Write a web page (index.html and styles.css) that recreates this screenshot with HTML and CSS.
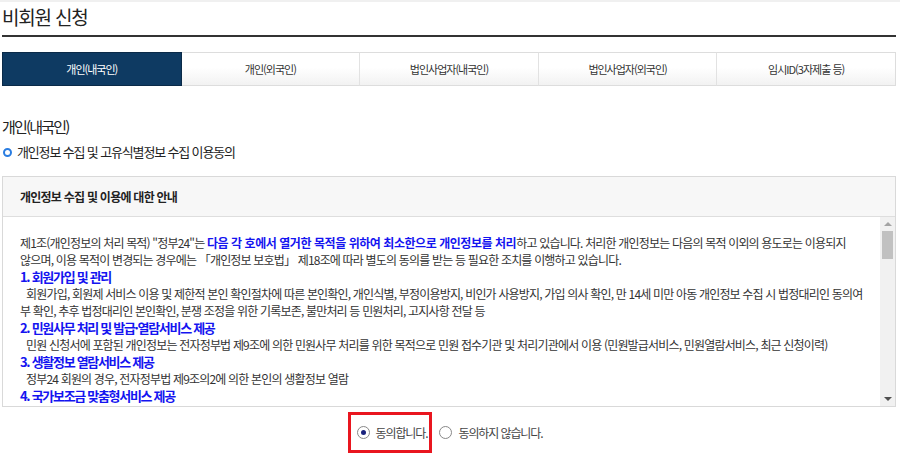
FILE: index.html
```html
<!DOCTYPE html>
<html lang="ko">
<head>
  <meta charset="UTF-8" />
  <meta name="viewport" content="width=device-width, initial-scale=1.0"/>
  <title>비회원 신청</title>
  <link rel="stylesheet" href="styles.css">
</head>
<body>
  <div class="page">
    <h1 class="page-title">비회원 신청</h1>

    <!-- 신청 유형 탭 -->
    <ul class="tabs">
      <li class="tab active">개인(내국인)</li>
      <li class="tab">개인(외국인)</li>
      <li class="tab">법인사업자(내국인)</li>
      <li class="tab">법인사업자(외국인)</li>
      <li class="tab">임시ID(3자제출 등)</li>
    </ul>

    <h2 class="section-title">개인(내국인)</h2>
    <p class="bullet-title">개인정보 수집 및 고유식별정보 수집 이용동의</p>

    <!-- 동의 안내 박스 -->
    <div class="agree-box">
      <div class="agree-head">개인정보 수집 및 이용에 대한 안내</div>
      <div class="agree-body">
        <div class="agree-text">
          <span class="line">제1조(개인정보의 처리 목적) "정부24"는 <b class="em">다음 각 호에서 열거한 목적을 위하여 최소한으로 개인정보를 처리</b>하고 있습니다. 처리한 개인정보는 다음의 목적 이외의 용도로는 이용되지</span>
          <span class="line">않으며, 이용 목적이 변경되는 경우에는 「개인정보 보호법」 제18조에 따라 별도의 동의를 받는 등 필요한 조치를 이행하고 있습니다.</span>
          <span class="line heading">1. 회원가입 및 관리</span>
          <span class="line indent">회원가입, 회원제 서비스 이용 및 제한적 본인 확인절차에 따른 본인확인, 개인식별, 부정이용방지, 비인가 사용방지, 가입 의사 확인, 만 14세 미만 아동 개인정보 수집 시 법정대리인 동의여</span>
          <span class="line">부 확인, 추후 법정대리인 본인확인, 분쟁 조정을 위한 기록보존, 불만처리 등 민원처리, 고지사항 전달 등</span>
          <span class="line heading">2. 민원사무 처리 및 발급·열람서비스 제공</span>
          <span class="line indent">민원 신청서에 포함된 개인정보는 전자정부법 제9조에 의한 민원사무 처리를 위한 목적으로 민원 접수기관 및 처리기관에서 이용 (민원발급서비스, 민원열람서비스, 최근 신청이력)</span>
          <span class="line heading">3. 생활정보 열람서비스 제공</span>
          <span class="line indent">정부24 회원의 경우, 전자정부법 제9조의2에 의한 본인의 생활정보 열람</span>
          <span class="line heading">4. 국가보조금 맞춤형서비스 제공</span>
        </div>
        <!-- 스크롤바 -->
        <div class="scrollbar">
          <span class="scroll-btn up"></span>
          <span class="scroll-track"><span class="scroll-thumb"></span></span>
          <span class="scroll-btn down"></span>
        </div>
      </div>
    </div>

    <!-- 동의 여부 -->
    <div class="agree-choice">
      <label class="choice highlight">
        <input type="radio" name="agree" value="Y" checked>
        <span>동의합니다.</span>
      </label>
      <label class="choice">
        <input type="radio" name="agree" value="N">
        <span>동의하지 않습니다.</span>
      </label>
    </div>
  </div>
</body>
</html>
```

FILE: styles.css
```css
body {
  font-family: "Noto Sans CJK KR", "Noto Sans", sans-serif;
  background-color: #fff;
  color: #333;
  margin: 0;
  padding: 0;
  border-top: 2px solid #f0f0f0;
}

.page {
  margin: 0 4px 0 2px;
}

.page-title {
  margin: 0;
  font-size: 19px;
  font-weight: normal;
  letter-spacing: -1.2px;
  line-height: 30px;
  color: #222;
  padding-bottom: 3px;
  border-bottom: 2px solid #333;
}

/* 탭 */
.tabs {
  display: flex;
  list-style: none;
  margin: 15px 0 0;
  padding: 0;
}

.tab {
  flex: 1;
  height: 32px;
  line-height: 32px;
  text-align: center;
  font-size: 11px;
  letter-spacing: -1px;
  color: #333;
  border-top: 1px solid #ddd;
  border-bottom: 1px solid #ddd;
  border-right: 1px solid #e2e2e2;
  background: linear-gradient(#fff 0%, #fff 45%, #f2f2f2 100%);
}

.tab:last-child {
  border-right: 1px solid #ddd;
}

.tab.active {
  background: #0e3a62;
  color: #fff;
  border: 1px solid #0a2a48;
}

.section-title {
  margin: 31px 0 0;
  font-size: 15px;
  font-weight: normal;
  letter-spacing: -1.8px;
  line-height: 20px;
  color: #222;
}

.bullet-title {
  display: flex;
  align-items: center;
  margin: 6px 0 0;
  font-size: 13px;
  letter-spacing: -1.15px;
  line-height: 18px;
  color: #222;
}

.bullet-title::before {
  content: "";
  width: 5px;
  height: 5px;
  border: 2px solid #2a7de1;
  border-radius: 50%;
  margin: 0 5px 0 1px;
}

/* 안내 박스 */
.agree-box {
  margin-top: 15px;
  border: 1px solid #d9d9d9;
}

.agree-head {
  height: 39px;
  line-height: 39px;
  padding-left: 17px;
  background-color: #f7f7f7;
  border-bottom: 1px solid #dedede;
  font-size: 12px;
  font-weight: bold;
  letter-spacing: -0.75px;
  color: #222;
}

.agree-body {
  display: flex;
  height: 189px;
}

.agree-text {
  flex: 1;
  overflow: hidden;
  padding: 17px 0 0 17px;
  font-size: 12px;
  letter-spacing: -0.82px;
  line-height: 17px;
  color: #333;
}

.line {
  display: block;
  white-space: nowrap;
}

.line.indent {
  padding-left: 6px;
}

.line.heading {
  font-size: 13px;
  font-weight: bold;
  color: #1414f0;
  letter-spacing: -1.3px;
}

.em {
  color: #1414f0;
  letter-spacing: -0.45px;
}

/* 스크롤바 */
.scrollbar {
  width: 15px;
  margin-left: 2px;
  background-color: #f1f1f1;
  display: flex;
  flex-direction: column;
}

.scroll-btn {
  height: 14px;
  display: flex;
  align-items: center;
  justify-content: center;
}

.scroll-btn::after {
  content: "";
  border-left: 4px solid transparent;
  border-right: 4px solid transparent;
}

.scroll-btn.up::after {
  border-bottom: 4px solid #a3a3a3;
}

.scroll-btn.down::after {
  border-top: 4px solid #505050;
}

.scroll-track {
  flex: 1;
  display: flex;
  flex-direction: column;
}

.scroll-thumb {
  height: 28px;
  margin: 0 2px;
  background-color: #c1c1c1;
}

/* 동의 여부 */
.agree-choice {
  display: flex;
  justify-content: center;
  align-items: center;
  gap: 7px;
  margin-top: 5px;
  padding-right: 8px;
}

.choice {
  display: flex;
  align-items: center;
  gap: 6px;
  font-size: 12px;
  letter-spacing: -1.1px;
  color: #444;
}

.choice.highlight {
  border: 3px solid #e9161f;
  padding: 0 2px 0 6px;
  height: 35px;
}

.choice input {
  appearance: none;
  margin: 0;
  width: 13px;
  height: 13px;
  border: 1px solid #888;
  border-radius: 50%;
  background: #fff;
  display: flex;
  align-items: center;
  justify-content: center;
}

.choice input:checked::after {
  content: "";
  width: 5px;
  height: 5px;
  border-radius: 50%;
  background: #1a237e;
}
```
